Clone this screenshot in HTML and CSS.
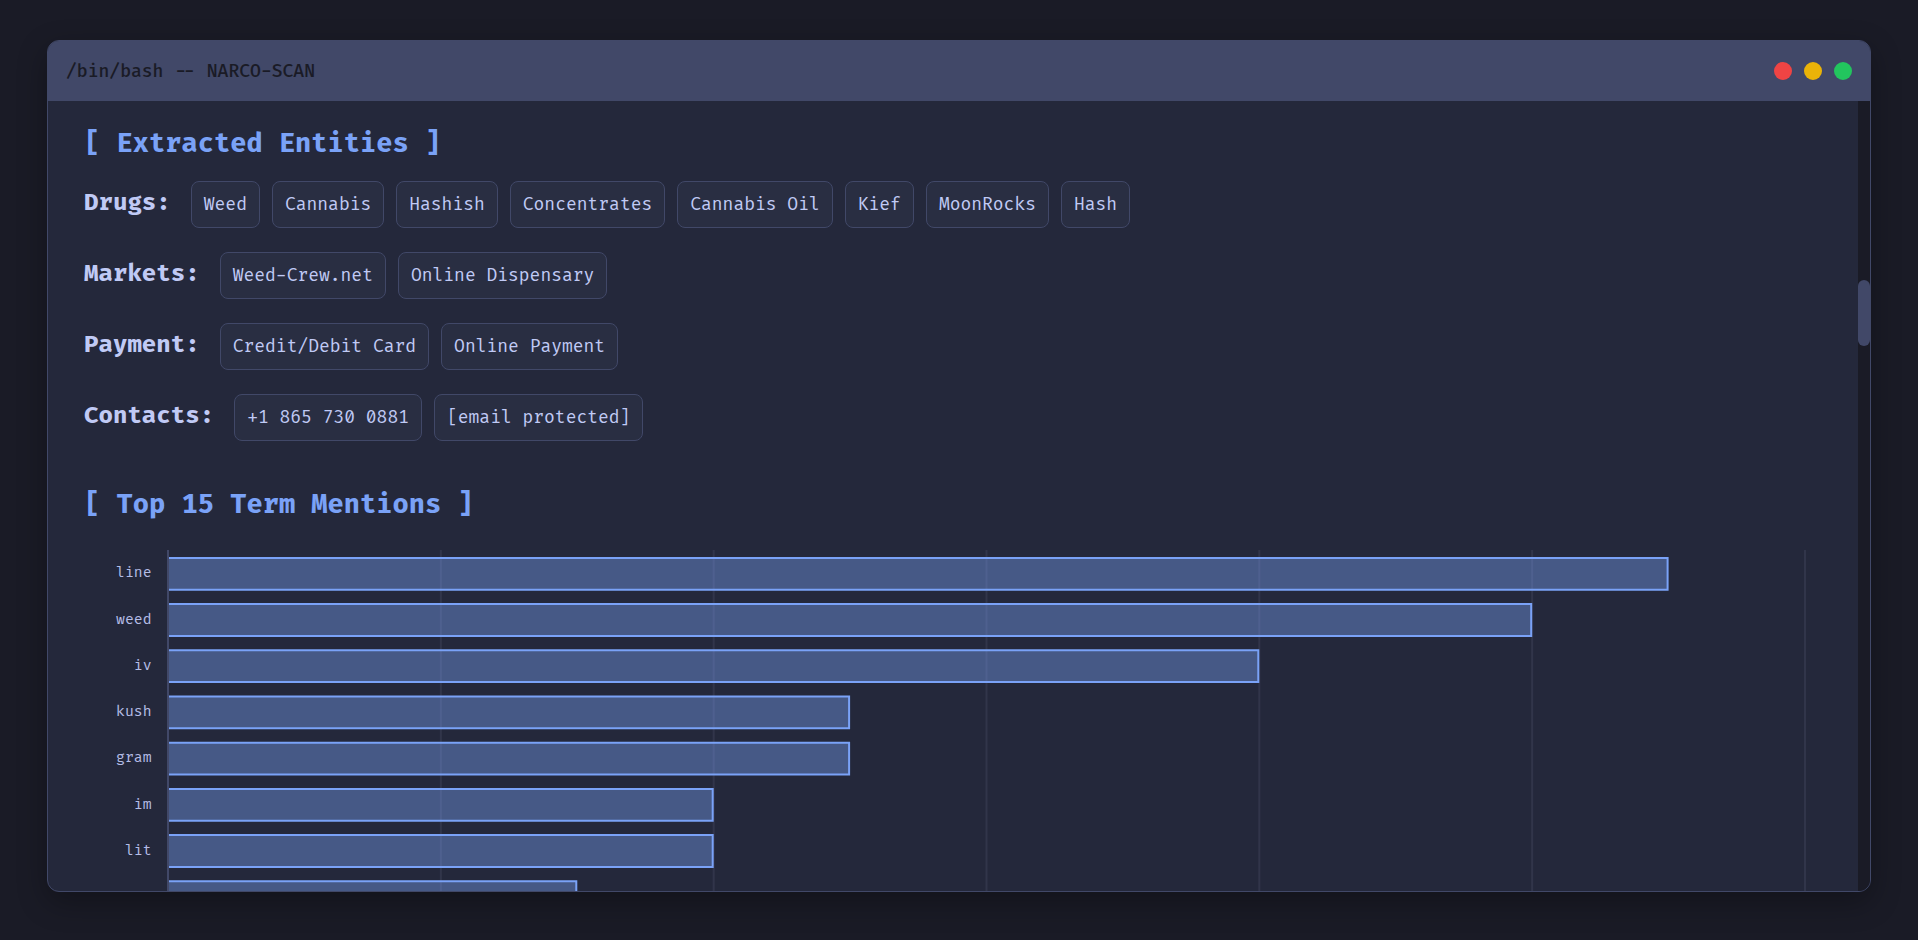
FILE: index.html
```html
<!DOCTYPE html>
<html lang="en">
<head>
<meta charset="utf-8">
<title>NARCO-SCAN</title>
<link rel="stylesheet" href="styles.css">
</head>
<body>
<div class="window">
  <header class="titlebar">
    <span class="title">/bin/bash -- NARCO-SCAN</span>
    <div class="dots"><i class="dot red"></i><i class="dot yellow"></i><i class="dot green"></i></div>
  </header>
  <div class="pane">
    <main class="content">
      <h2 class="heading">[ Extracted Entities ]</h2>
      <div class="row"><strong class="label">Drugs:</strong><span class="tag">Weed</span><span class="tag">Cannabis</span><span class="tag">Hashish</span><span class="tag">Concentrates</span><span class="tag">Cannabis Oil</span><span class="tag">Kief</span><span class="tag">MoonRocks</span><span class="tag">Hash</span></div>
      <div class="row"><strong class="label">Markets:</strong><span class="tag">Weed-Crew.net</span><span class="tag">Online Dispensary</span></div>
      <div class="row"><strong class="label">Payment:</strong><span class="tag">Credit/Debit Card</span><span class="tag">Online Payment</span></div>
      <div class="row"><strong class="label">Contacts:</strong><span class="tag">+1 865 730 0881</span><span class="tag">[email protected]</span></div>
      <h2 class="heading second">[ Top 15 Term Mentions ]</h2>
      <svg class="chart" width="1770" height="342" viewBox="0 0 1770 342">
        <g class="grid">
          <line x1="357.83" y1="0" x2="357.83" y2="342"/>
          <line x1="630.67" y1="0" x2="630.67" y2="342"/>
          <line x1="903.5" y1="0" x2="903.5" y2="342"/>
          <line x1="1176.33" y1="0" x2="1176.33" y2="342"/>
          <line x1="1449.17" y1="0" x2="1449.17" y2="342"/>
          <line x1="1722" y1="0" x2="1722" y2="342"/>
        </g>
        <line class="axis" x1="85" y1="0" x2="85" y2="342"/>
        <g class="bars">
          <path d="M86 7.9 H1584.6 V39.7 H86"/>
          <path d="M86 54.1 H1448.2 V85.9 H86"/>
          <path d="M86 100.3 H1175.3 V132.1 H86"/>
          <path d="M86 146.5 H766.1 V178.3 H86"/>
          <path d="M86 192.7 H766.1 V224.5 H86"/>
          <path d="M86 238.9 H629.7 V270.7 H86"/>
          <path d="M86 285.1 H629.7 V316.9 H86"/>
          <path d="M86 331.3 H493.3 V363.1 H86"/>
        </g>
        <g class="ticks">
          <text x="68.5" y="27">line</text>
          <text x="68.5" y="73.5">weed</text>
          <text x="68.5" y="119.6">iv</text>
          <text x="68.5" y="165.9">kush</text>
          <text x="68.5" y="211.8">gram</text>
          <text x="68.5" y="258.6">im</text>
          <text x="68.5" y="304.5">lit</text>
        </g>
      </svg>
    </main>
    <div class="scrollbar"><div class="thumb"></div></div>
  </div>
</div>
</body>
</html>
```
FILE: styles.css
```css
* { box-sizing: border-box; }
html, body { height: 100%; margin: 0; }
body {
  background: #1a1b26;
  padding: 40px 47px 48px;
  font-family: "Fira Code", "Noto Sans Mono", "DejaVu Sans Mono", monospace;
  overflow: hidden;
}
.window {
  height: 852px;
  display: flex;
  flex-direction: column;
  background: #24283b;
  border: 1px solid #414868;
  border-radius: 12px;
  overflow: hidden;
  box-shadow: 0 10px 30px rgba(0, 0, 0, 0.3);
}
.titlebar {
  flex: none;
  height: 61px;
  margin: -1px -1px 0;
  padding: 0 19px;
  display: flex;
  align-items: center;
  justify-content: space-between;
  background: #414868;
}
.title { color: #1a1b26; font-size: 17.6px; font-weight: 500; padding-top: 1px; }
.dots { display: flex; gap: 12px; }
.dot { display: block; width: 18px; height: 18px; border-radius: 50%; }
.red { background: #ef4444; }
.yellow { background: #eab308; }
.green { background: #22c55e; }
.pane { flex: 1; min-height: 0; display: flex; }
.content { flex: 1; min-width: 0; overflow: hidden; padding: 26px 36px 0; }
.heading { margin: 0 0 20px; color: #7aa2f7; font-size: 26.4px; font-weight: 700; line-height: 34px; }
.heading.second { margin-top: 23px; margin-bottom: 28px; }
.row { display: flex; align-items: flex-start; gap: 12px; height: 71px; }
.label { color: #c0caf5; font-size: 23.5px; font-weight: 700; line-height: 32px; margin-right: 8px; margin-top: 6px; }
.tag { padding: 0 12px; height: 47px; line-height: 45px; color: #c0caf5; font-size: 17.55px; background: #292e42; border: 1px solid #414868; border-radius: 8px; white-space: nowrap; }
.chart { display: block; margin-left: -1px; overflow: hidden; }
.grid line { stroke: rgba(192, 202, 245, 0.085); stroke-width: 2; }
.axis { stroke: #414868; stroke-width: 2; }
.bars path { fill: rgba(122, 162, 247, 0.4); stroke: #7aa2f7; stroke-width: 2; }
.ticks text { fill: #b5bde6; font-size: 14.4px; text-anchor: end; }
.scrollbar { flex: none; width: 12px; background: #1a1b26; }
.thumb { width: 12px; height: 66px; margin-top: 179px; background: #414868; border-radius: 6px; }
```
